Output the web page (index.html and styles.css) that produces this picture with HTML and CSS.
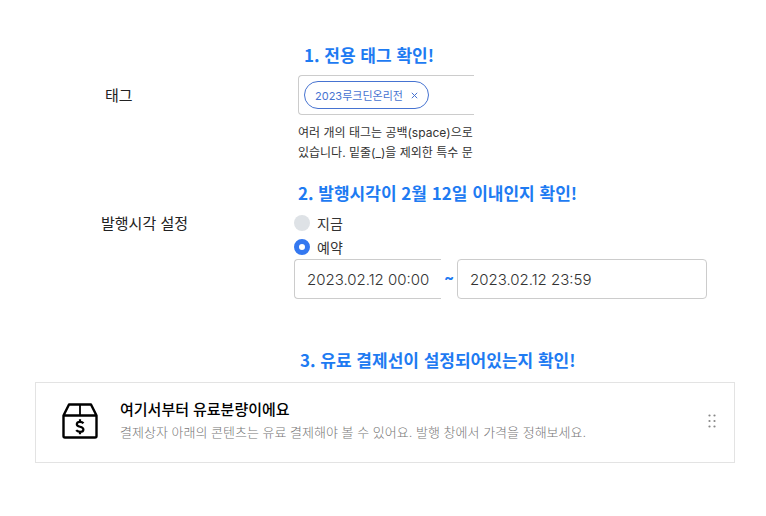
FILE: index.html
```
<!DOCTYPE html>
<html lang="ko">
<head>
    <meta charset="UTF-8">
    <meta name="viewport" content="width=device-width, initial-scale=1.0">
    <title>발행 설정 확인</title>
    <link rel="stylesheet" href="styles.css">
</head>
<body>

    <main class="guide">
        <section class="step step-tag">
            <span class="step-label" id="tagLabel">태그</span>
            <div class="step-body">
                <h2 class="step-title">1. 전용 태그 확인!</h2>
                <div class="tag-box" role="group" aria-labelledby="tagLabel">
                    <button class="tag" type="button">2023루크딘온리전
                        <svg class="tag-close" viewBox="0 0 7 7" aria-hidden="true"><path d="M0.8 0.8L6.2 6.2M6.2 0.8L0.8 6.2"/></svg>
                    </button>
                </div>
                <p class="help">여러 개의 태그는 공백(space)으로<br>있습니다. 밑줄(_)을 제외한 특수 문</p>
            </div>
        </section>

        <section class="step step-time">
            <span class="step-label" id="timeLabel">발행시각 설정</span>
            <div class="step-body" role="group" aria-labelledby="timeLabel">
                <h2 class="step-title">2. 발행시각이 2월 12일 이내인지 확인!</h2>
                <label class="option"><input type="radio" name="publish"> 지금</label>
                <label class="option"><input type="radio" name="publish" checked> 예약</label>
                <div class="range">
                    <input class="date date-start" type="text" value="2023.02.12 00:00" aria-label="시작 시각">
                    <span class="tilde">~</span>
                    <input class="date" type="text" value="2023.02.12 23:59" aria-label="종료 시각">
                </div>
            </div>
        </section>

        <section class="paid">
            <h2 class="step-title paid-title">3. 유료 결제선이 설정되어있는지 확인!</h2>
            <div class="paid-line">
                <svg class="box-icon" viewBox="0 0 36 36" aria-hidden="true">
                    <path d="M1.5 12.5L7 1.5H29L34.5 12.5V33Q34.5 34.5 33 34.5H3Q1.5 34.5 1.5 33ZM1.5 12.5H34.5"/>
                    <path class="thin" d="M18 2V12"/>
                    <path class="dollar" d="M21.5 20.2Q20.3 18.8 18 18.8Q14.8 18.8 14.8 21.2Q14.8 23 18 23.7Q21.4 24.5 21.4 26.4Q21.4 28.8 18 28.8Q15.4 28.8 14.2 27.2M18 16.2V18.8M18 28.8V31.2"/>
                </svg>
                <div class="paid-text">
                    <strong>여기서부터 유료분량이에요</strong>
                    <p>결제상자 아래의 콘텐츠는 유료 결제해야 볼 수 있어요. 발행 창에서 가격을 정해보세요.</p>
                </div>
                <button class="handle" type="button" aria-label="이동">
                    <svg viewBox="0 0 8 14" aria-hidden="true">
                        <circle cx="1.5" cy="1.5" r="1.1"/><circle cx="6.5" cy="1.5" r="1.1"/>
                        <circle cx="1.5" cy="7" r="1.1"/><circle cx="6.5" cy="7" r="1.1"/>
                        <circle cx="1.5" cy="12.5" r="1.1"/><circle cx="6.5" cy="12.5" r="1.1"/>
                    </svg>
                </button>
            </div>
        </section>
    </main>

</body>
</html>
```
FILE: styles.css
```
* {
    box-sizing: border-box;
}
body {
    margin: 0;
    background: #fff;
    color: #333;
    font-family: Inter, "Noto Sans CJK KR", sans-serif;
    font-size: 15px;
}
h2, p {
    margin: 0;
}
button, input {
    font: inherit;
    color: inherit;
}
.guide {
    padding: 43px 31px 0 35px;
}
.step {
    display: grid;
    grid-template-columns: 193px minmax(0, 1fr);
}
.step-tag {
    padding-left: 70px;
}
.step-time {
    padding: 18px 28px 0 66px;
}
.step-label {
    line-height: 24px;
    margin-top: 41px;
    color: #222;
}
.step-time .step-label {
    margin-top: 31px;
}
.step-title {
    color: #1e7bf2;
    font-family: "Noto Sans CJK KR", sans-serif;
    font-size: 17px;
    font-weight: 700;
    line-height: 24px;
    white-space: nowrap;
    padding-left: 6px;
}
.tag-box {
    width: 176px;
    height: 40px;
    margin-top: 8px;
    padding: 5px;
    border: 1px solid #ccc;
    border-right: 0;
    border-radius: 4px 0 0 4px;
}
.tag {
    display: flex;
    align-items: center;
    gap: 8px;
    height: 28px;
    padding: 0 10px;
    border: 1px solid #4673d1;
    border-radius: 14px;
    background: #fff;
    color: #4673d1;
    font-size: 11px;
    white-space: nowrap;
}
.tag-close {
    width: 7px;
    height: 7px;
    fill: none;
    stroke: #4673d1;
}
.help {
    width: 177px;
    margin-top: 8px;
    overflow: hidden;
    font-size: 12px;
    line-height: 20px;
    white-space: nowrap;
}
.step-time .step-title {
    padding-left: 4px;
    margin-bottom: 6px;
}
.option {
    display: flex;
    align-items: center;
    gap: 7px;
    height: 24px;
    font-size: 14px;
}
.option input {
    appearance: none;
    width: 16px;
    height: 16px;
    margin: 0;
    border-radius: 50%;
    background: #dee2e6;
}
.option input:checked {
    border: 5px solid #3478f0;
    background: #fff;
}
.range {
    display: grid;
    grid-template-columns: 147fr 16px 250fr;
    align-items: center;
}
.date {
    width: 100%;
    min-width: 0;
    height: 40px;
    padding: 0 12px;
    border: 1px solid #ccc;
    border-radius: 4px;
    background: #fff;
    font-size: 15px;
    font-weight: 300;
}
.date-start {
    border-right: 0;
    border-radius: 4px 0 0 4px;
}
.tilde {
    padding-bottom: 4px;
    color: #1e7bf2;
    font-size: 15px;
    font-weight: 700;
    text-align: center;
}
.paid {
    margin-top: 49px;
}
.paid-title {
    padding-left: 265px;
}
.paid-line {
    display: flex;
    align-items: center;
    margin-top: 10px;
    padding: 16px 18px 19px 26px;
    border: 1px solid #e3e3e3;
}
.box-icon {
    width: 36px;
    height: 36px;
    fill: none;
    stroke: #000;
    stroke-width: 2.4;
    stroke-linejoin: round;
}
.box-icon .thin {
    stroke-width: 1.8;
}
.box-icon .dollar {
    stroke-width: 2.2;
}
.paid-text {
    flex: 1;
    padding-left: 22px;
}
.paid-text strong {
    display: block;
    color: #000;
    font-weight: 500;
    line-height: 22px;
}
.paid-text p {
    color: #777;
    font-size: 13px;
    font-weight: 300;
    line-height: 22px;
}
.handle {
    display: flex;
    padding: 0;
    border: 0;
    background: none;
}
.handle svg {
    width: 8px;
    height: 14px;
    fill: #888;
}
```
